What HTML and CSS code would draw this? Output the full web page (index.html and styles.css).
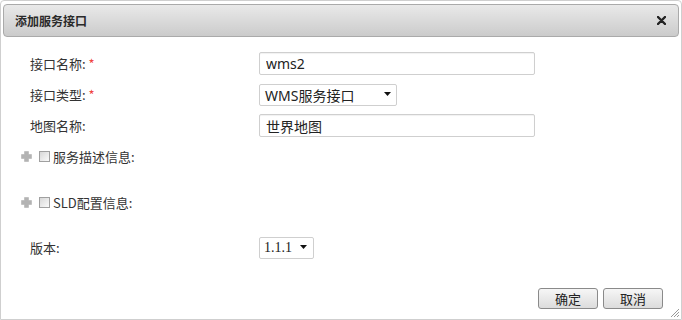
FILE: index.html
```html
<!DOCTYPE html>
<html>
<head>
<meta charset="utf-8">
<link rel="stylesheet" href="styles.css">
</head>
<body>
<div class="dialog">
  <div class="titlebar">
    <span class="title">添加服务接口</span>
    <svg class="close" width="9" height="9" viewBox="0 0 9 9"><path d="M1 1L8 8M8 1L1 8" stroke="#222" stroke-width="2.4" stroke-linecap="round"/></svg>
  </div>
  <div class="content">
    <div class="row">
      <label class="lbl">接口名称: <span class="req">*</span></label>
      <input class="text" type="text" value="wms2">
    </div>
    <div class="row">
      <label class="lbl">接口类型: <span class="req">*</span></label>
      <div class="select sel-type"><span>WMS服务接口</span><svg width="8" height="5" viewBox="0 0 8 5"><path d="M0 0H7L3.5 4z" fill="#111"/></svg></div>
    </div>
    <div class="row">
      <label class="lbl">地图名称:</label>
      <input class="text" type="text" value="世界地图">
    </div>
    <div class="row sec">
      <svg class="plus" width="11" height="11" viewBox="0 0 11 11"><path d="M3.5 0.5h4v3H10.5v4H7.5V10.5h-4V7.5H0.5v-4h3z" fill="#b3b3b3" stroke="#aaa" stroke-width="0.5" stroke-linejoin="round"/></svg>
      <span class="cb"></span>
      <span class="sec-text">服务描述信息:</span>
    </div>
    <div class="row sec sec2">
      <svg class="plus" width="11" height="11" viewBox="0 0 11 11"><path d="M3.5 0.5h4v3H10.5v4H7.5V10.5h-4V7.5H0.5v-4h3z" fill="#b3b3b3" stroke="#aaa" stroke-width="0.5" stroke-linejoin="round"/></svg>
      <span class="cb"></span>
      <span class="sec-text">SLD配置信息:</span>
    </div>
    <div class="row ver">
      <label class="lbl">版本:</label>
      <div class="select sel-ver"><span class="vtext">1.1.1</span><svg width="8" height="5" viewBox="0 0 8 5"><path d="M0 0H7L3.5 4z" fill="#111"/></svg></div>
    </div>
  </div>
  <div class="footer">
    <button class="btn">确定</button>
    <button class="btn">取消</button>
  </div>
  <svg class="grip" width="10" height="10" viewBox="0 0 10 10"><path d="M9 1L1 9M9 4L4 9M9 7L7 9" stroke="#999" stroke-width="1"/></svg>
</div>
</body>
</html>
```
FILE: styles.css
```css
* { box-sizing: border-box; }
html, body { margin: 0; padding: 0; background: #fff; }
body {
  font-family: "Noto Sans", "Noto Sans CJK SC", sans-serif;
  color: #333;
}
.dialog {
  position: relative;
  width: 682px;
  height: 320px;
  border: 1px solid #cfcfcf;
  border-radius: 4px 4px 0 0;
  padding: 3px 2px 0 2px;
  background: #fff;
  display: flex;
  flex-direction: column;
}
.titlebar {
  height: 33px;
  border: 1px solid #aaa;
  border-radius: 4px;
  background: linear-gradient(#e9e9e9, #cbcbcb);
  display: flex;
  align-items: center;
  justify-content: space-between;
  padding: 0 12px 0 11px;
}
.title {
  font-family: "Noto Sans CJK SC", sans-serif;
  font-weight: bold;
  font-size: 12px;
  color: #2a2a2a;
}
.close { display: block; }
.content {
  padding: 11px 0 0 27px;
  display: flex;
  flex-direction: column;
}
.row {
  height: 31px;
  display: flex;
  align-items: center;
}
.lbl {
  width: 229px;
  font-family: "Noto Sans CJK SC", sans-serif;
  font-size: 13px;
  line-height: 16px;
  color: #333;
}
.req { color: #f0443e; }
.text {
  width: 276px;
  height: 23px;
  border: 1px solid #cfcfcf;
  border-radius: 2px;
  box-shadow: inset 0 1px 1px rgba(0,0,0,0.06);
  padding: 0 6px;
  font-family: "Noto Sans", "Noto Sans CJK SC", sans-serif;
  font-size: 14px;
  color: #222;
  outline: none;
  margin: 0;
}
.select {
  height: 22px;
  border: 1px solid #cfcfcf;
  border-radius: 2px;
  display: flex;
  align-items: center;
  justify-content: space-between;
  padding: 0 4px 0 5px;
  font-size: 14px;
  color: #222;
}
.sel-type { width: 138px; }
.sel-ver { width: 55px; padding: 0 5px 0 4px; }
.vtext { font-family: "Liberation Serif", serif; font-size: 14px; }
.sec { padding-left: 0; margin-left: -9px; }
.sec2 { margin-top: 15px; }
.ver { margin-top: 14px; }
.plus { margin-right: 7px; }
.cb {
  width: 11px;
  height: 11px;
  border: 1px solid #a0a0a0;
  background: linear-gradient(135deg, #d8d8d8, #fafafa);
  margin-right: 3px;
}
.sec-text {
  font-family: "Noto Sans CJK SC", sans-serif;
  font-size: 13px;
  color: #333;
}
.footer {
  margin-top: auto;
  margin-bottom: 10px;
  display: flex;
  justify-content: flex-end;
  gap: 5px;
  padding-right: 16px;
}
.btn {
  width: 60px;
  height: 21px;
  border: 1px solid #8a8a8a;
  border-radius: 3px;
  background: linear-gradient(#f6f6f6, #dcdcdc);
  font-family: "Noto Sans CJK SC", sans-serif;
  font-size: 13px;
  line-height: 17px;
  color: #222;
  padding: 0;
  margin: 0;
}
.grip {
  position: absolute;
  right: 1px;
  bottom: 1px;
}
```
